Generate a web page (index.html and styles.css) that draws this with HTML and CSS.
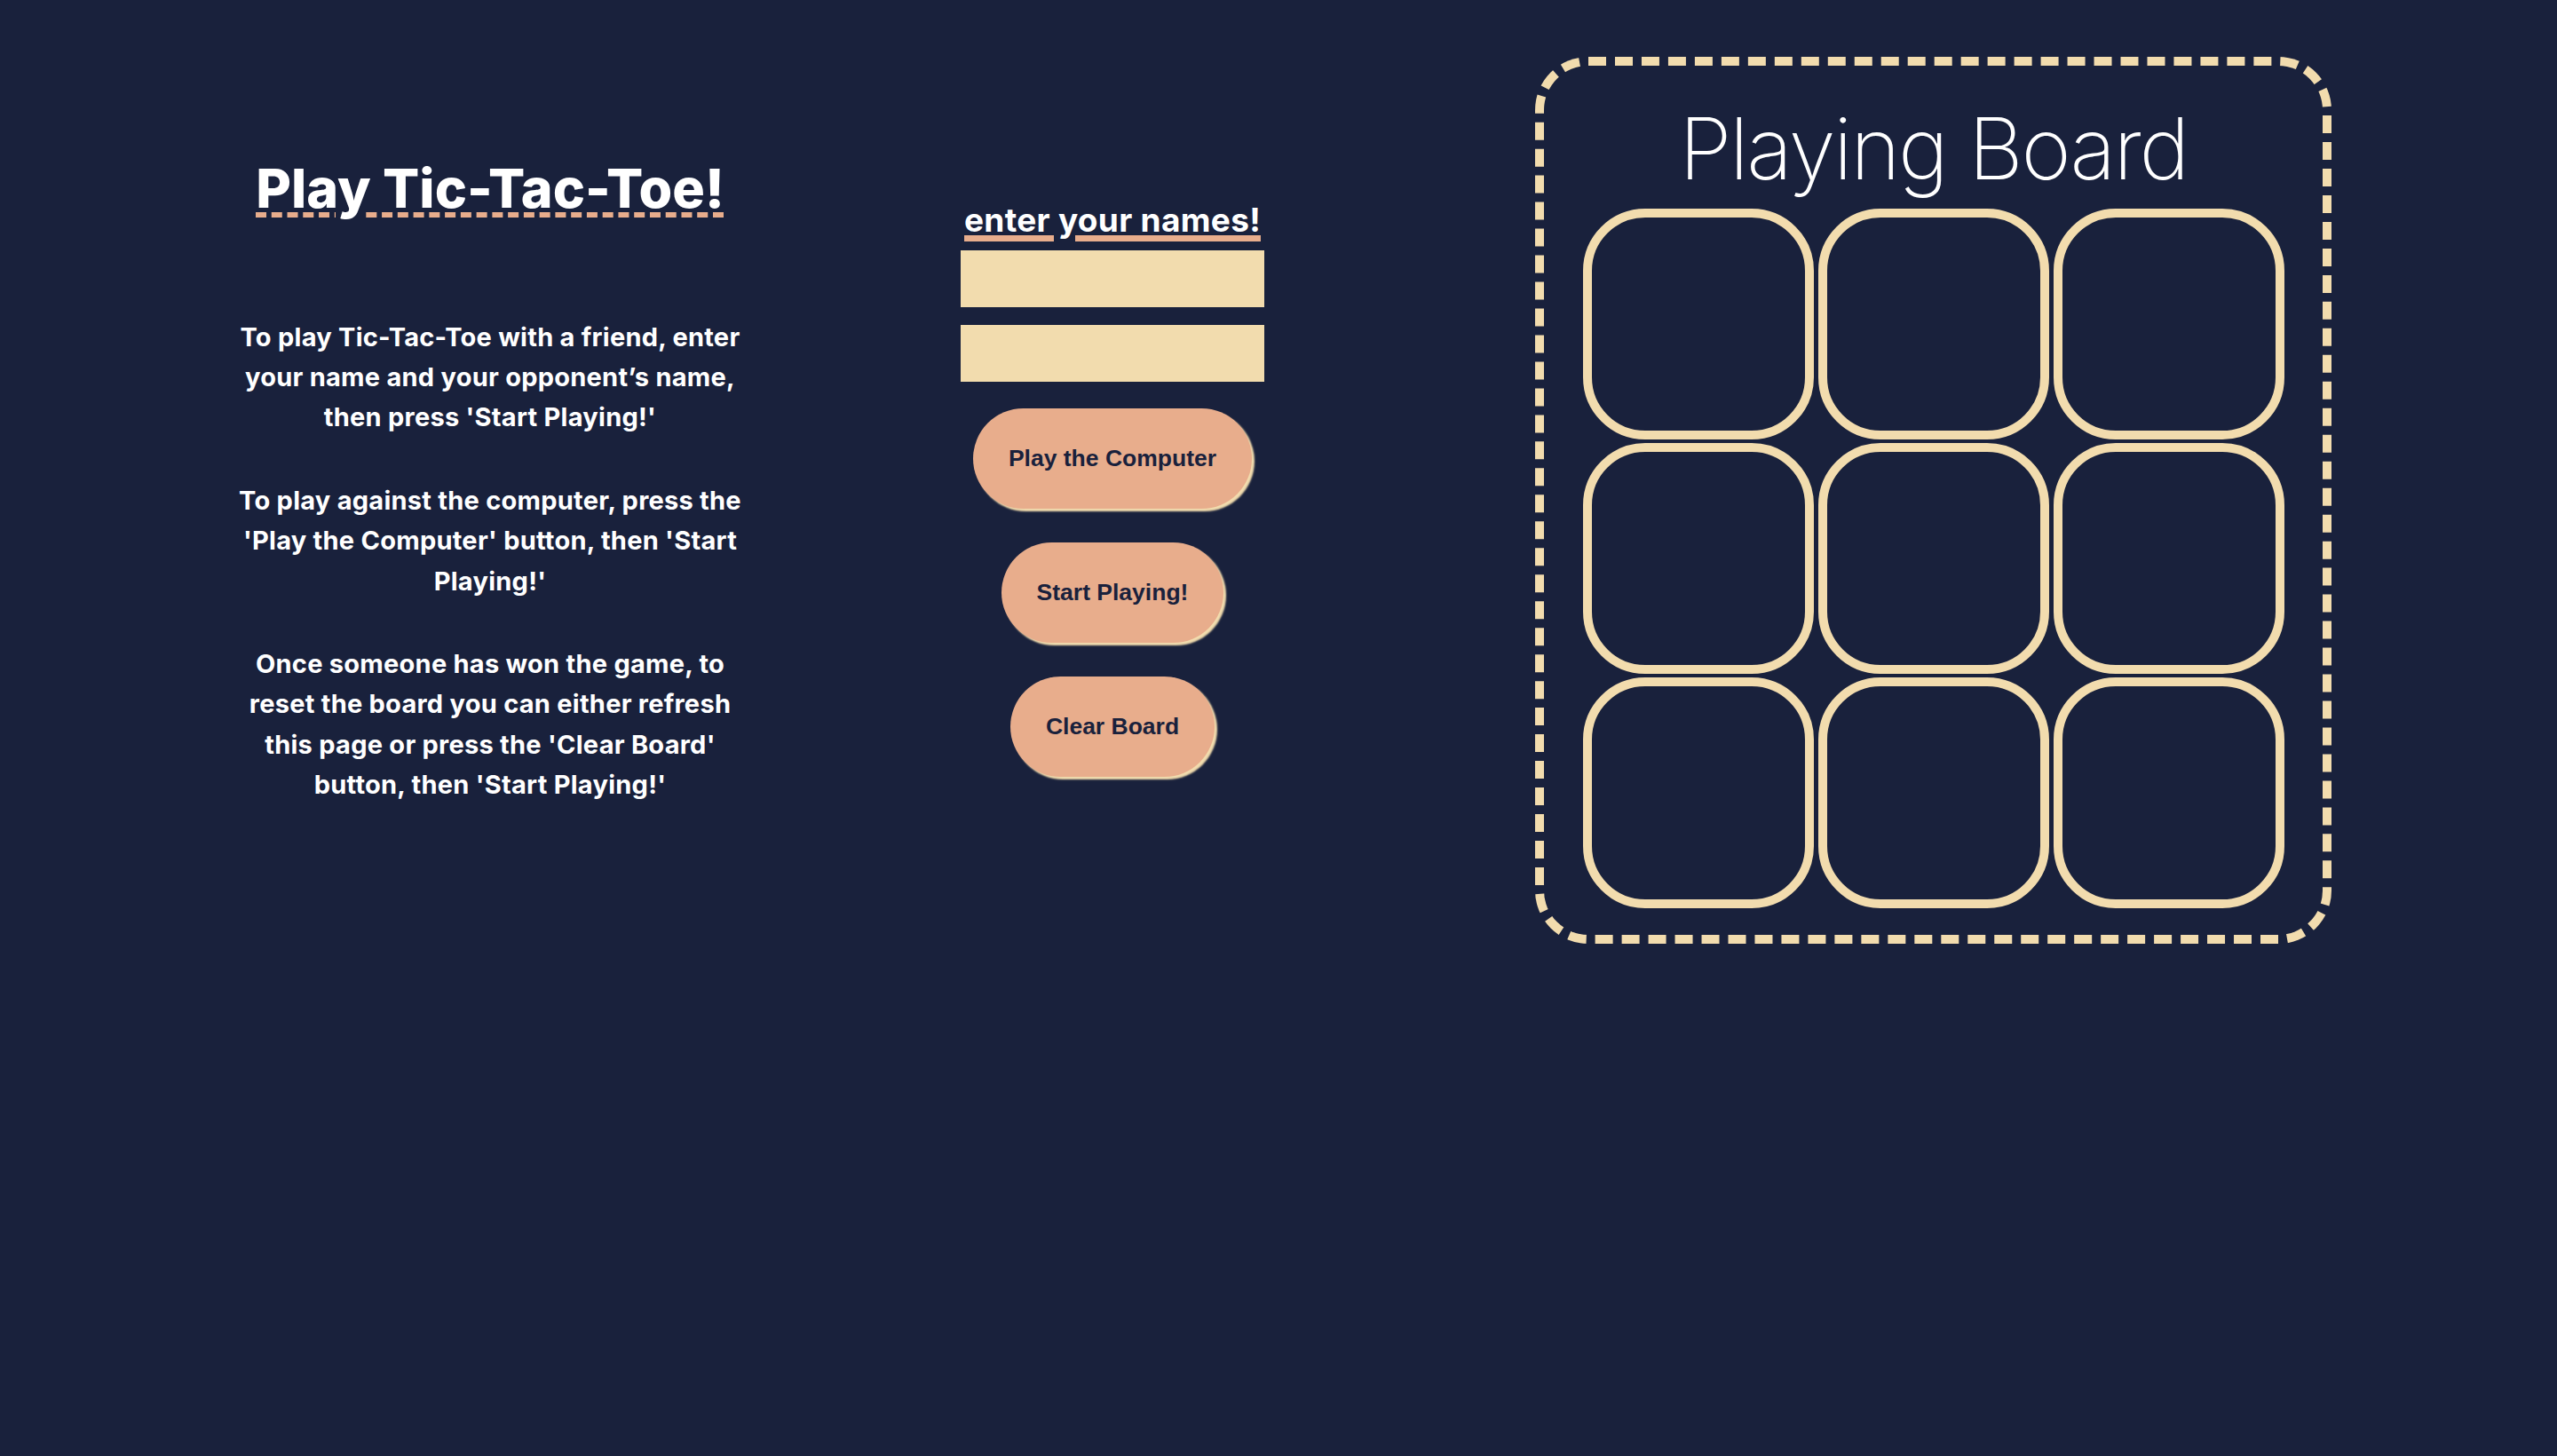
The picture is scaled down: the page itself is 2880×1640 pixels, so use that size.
FILE: index.html
```html
<!DOCTYPE html>
<html lang="en">
<head>
<meta charset="utf-8">
<title>Tic-Tac-Toe</title>
<link rel="stylesheet" href="styles.css">
</head>
<body>
<main class="page">
  <section class="intro">
    <h1 class="intro-title">Play Tic-Tac-Toe!</h1>
    <p class="intro-text">To play Tic-Tac-Toe with a friend, enter your name and your opponent’s name, then press 'Start Playing!'</p>
    <p class="intro-text">To play against the computer, press the 'Play the Computer' button, then 'Start Playing!'</p>
    <p class="intro-text">Once someone has won the game, to reset the board you can either refresh this page or press the 'Clear Board' button, then 'Start Playing!'</p>
  </section>

  <section class="controls">
    <h2 class="controls-title">enter your names!</h2>
    <input class="name-input" type="text" aria-label="Player one name">
    <input class="name-input" type="text" aria-label="Player two name">
    <button class="btn">Play the Computer</button>
    <button class="btn">Start Playing!</button>
    <button class="btn">Clear Board</button>
  </section>

  <section class="board">
    <h2 class="board-title">Playing Board</h2>
    <div class="grid">
      <div class="cell"></div>
      <div class="cell"></div>
      <div class="cell"></div>
      <div class="cell"></div>
      <div class="cell"></div>
      <div class="cell"></div>
      <div class="cell"></div>
      <div class="cell"></div>
      <div class="cell"></div>
    </div>
  </section>
</main>
</body>
</html>
```

FILE: styles.css
```css
html, body {
  margin: 0;
  padding: 0;
  background: #19213c;
}

body {
  font-family: Inter, "Noto Sans", sans-serif;
  color: #ffffff;
  min-height: 1640px;
}

.page {
  display: flex;
  align-items: flex-start;
  padding-top: 64px;
  padding-left: 252px;
}

/* Left column */
.intro {
  width: 600px;
  margin-top: 112px;
  text-align: center;
}

.intro-title {
  margin: 0 0 108px;
  font-size: 61px;
  line-height: 73px;
  font-weight: 800;
  letter-spacing: 0;
  text-decoration: underline dashed #e8ad8c;
  text-decoration-thickness: 6px;
  text-underline-offset: 5px;
}

.intro-text {
  margin: 48.5px 0 0;
  font-size: 29px;
  line-height: 45.2px;
  font-weight: 700;
  letter-spacing: 0.25px;
}

.intro-title + .intro-text {
  margin-top: 0;
}

/* Middle column */
.controls {
  width: 400px;
  margin-left: 201px;
  margin-top: 162px;
  display: flex;
  flex-direction: column;
  align-items: center;
}

.controls-title {
  margin: 0 0 12px;
  font-size: 37px;
  line-height: 44.4px;
  font-weight: 700;
  letter-spacing: 0.3px;
  text-decoration: underline solid #e8ad8c;
  text-decoration-thickness: 7px;
  text-underline-offset: 4px;
}

.name-input {
  display: block;
  box-sizing: border-box;
  width: 342px;
  height: 64px;
  margin: 0 0 20px;
  border: none;
  padding: 0 12px;
  background: #f2dcae;
  font-family: inherit;
  font-size: 24px;
  color: #19213c;
  outline: none;
}

.name-input + .name-input {
  margin-bottom: 0;
}

.btn {
  margin-top: 38px;
  padding: 41px 40px;
  border: none;
  border-radius: 60px;
  background: #e8ad8c;
  box-shadow: 3px 3px 2px #f2dcae;
  color: #19213c;
  font-family: "Liberation Sans", Arial, sans-serif;
  font-size: 26.5px;
  font-weight: 700;
  line-height: normal;
  cursor: pointer;
}

.name-input + .btn {
  margin-top: 30px;
}

/* Board */
.board {
  box-sizing: border-box;
  width: 897px;
  margin-left: 276px;
  padding: 35.6px 0 30px;
  border: 10px dashed #f2dcae;
  border-radius: 60px;
}

.board-title {
  margin: 0 0 10.4px;
  text-align: center;
  font-size: 96px;
  line-height: 115px;
  font-weight: 200;
  letter-spacing: -2.4px;
}

.grid {
  display: grid;
  grid-template-columns: repeat(3, 260px);
  grid-auto-rows: 260px;
  column-gap: 5px;
  row-gap: 4px;
  justify-content: center;
}

.cell {
  box-sizing: border-box;
  border: 10px solid #f2dcae;
  border-radius: 70px;
}
```
